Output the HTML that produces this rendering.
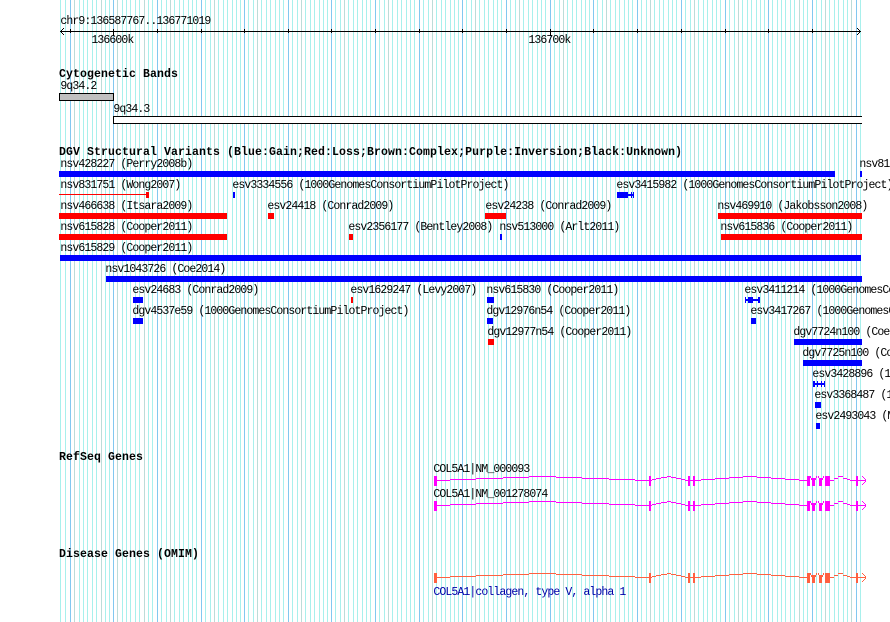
<!DOCTYPE html>
<html><head><meta charset="utf-8"><style>
html,body{margin:0;padding:0;background:#fff;width:890px;height:622px;overflow:hidden}
svg{display:block}
text{font-family:"Liberation Mono",monospace;font-size:11.5px;letter-spacing:-.9px;fill:#000;white-space:pre;transform:translate(.4px,-1px)}
text.b{font-weight:bold;letter-spacing:.1px;transform:translate(0,-1px)}
</style></head><body>
<svg width="890" height="622" viewBox="0 0 890 622" xmlns="http://www.w3.org/2000/svg" shape-rendering="crispEdges">
<defs>
<g id="blk"><path d="M0 0h1v622h-1z" fill="#82c8f0"/><path d="M4 0h1v622h-1zM9 0h1v622h-1zM13 0h1v622h-1zM17 0h1v622h-1zM22 0h1v622h-1zM26 0h1v622h-1zM31 0h1v622h-1zM35 0h1v622h-1zM39 0h1v622h-1z" fill="#a8f0ec"/></g>
<g id="gene">
<path fill="none" stroke="currentColor" d="M437 480.5H450M450 479.5H476M476 478.5H503M503 477.5H529M529 476.5H556M556 477.5H582M582 478.5H609M609 479.5H635M635 480.5H649M651 480.5H652M652 479.5H656M656 478.5H661M661 477.5H667M667 476.5H671M671 477.5H676M676 478.5H681M681 479.5H685M685 480.5H688M690 480.5H693M695 480.5H701M701 479.5H715M715 478.5H729M729 477.5H743M743 476.5H757M757 477.5H771M771 478.5H785M785 479.5H799M799 480.5H807M830 480.5H834M834 478.5H838M838 476.5H843M843 478.5H847M847 479.5H850M850 480.5H856M858 480.5H866M862 476.5h1M863 477.5h1M864 478.5h1M865 479.5h1M865 481.5h1M864 482.5h1M863 483.5h1M862 484.5h1"/>
<path fill="currentColor" d="M434 476h3v10h-3zM649 476h2v10h-2zM688 476h2v10h-2zM693 476h2v10h-2zM807 476h3v10h-3zM812 478h3v8h-3zM810 476h1v2h-1zM811 478h1v2h-1zM815 478h1v2h-1zM816 476h1v2h-1zM818 476h1v2h-1zM819 478h3v8h-3zM822 478h1v2h-1zM823 476h1v2h-1zM825 476h5v10h-5zM856 476h2v10h-2z"/>
</g>
</defs>
<rect x="60" y="0" width="1" height="622" fill="#a8f0ec"/><rect x="65" y="0" width="1" height="622" fill="#a8f0ec"/>
<use href="#blk" x="70"/><use href="#blk" x="113"/><use href="#blk" x="157"/><use href="#blk" x="201"/><use href="#blk" x="244"/><use href="#blk" x="288"/><use href="#blk" x="331"/><use href="#blk" x="375"/><use href="#blk" x="419"/><use href="#blk" x="462"/><use href="#blk" x="506"/><use href="#blk" x="550"/><use href="#blk" x="593"/><use href="#blk" x="637"/><use href="#blk" x="681"/><use href="#blk" x="725"/><use href="#blk" x="768"/><use href="#blk" x="812"/>
<path d="M856 0h1v622h-1z" fill="#82c8f0"/><path d="M860 0h1v622h-1z" fill="#a8f0ec"/>
<path fill="#bcdcd8" d="M74 0h1v622h-1zM101 0h1v622h-1zM117 0h1v622h-1zM144 0h1v622h-1zM170 0h1v622h-1zM214 0h1v622h-1zM257 0h1v622h-1zM301 0h1v622h-1zM344 0h1v622h-1zM388 0h1v622h-1zM432 0h1v622h-1zM475 0h1v622h-1zM519 0h1v622h-1zM563 0h1v622h-1zM606 0h1v622h-1zM650 0h1v622h-1zM694 0h1v622h-1zM738 0h1v622h-1zM799 0h1v622h-1zM825 0h1v622h-1zM851 0h1v622h-1z"/>

<!-- ruler -->
<text x="60" y="25">chr9:136587767..136771019</text>
<path fill="none" stroke="#000" d="M60 31.5H861M70.5 29V33M113.5 29V36M157.5 29V33M201.5 29V33M244.5 29V33M288.5 29V33M331.5 29V33M375.5 29V33M419.5 29V33M462.5 29V33M506.5 29V33M550.5 29V36M593.5 29V33M637.5 29V33M681.5 29V33M725.5 29V33M768.5 29V33M812.5 29V33M63.5 28V29M62.5 29V30M61.5 30V31M60.5 31V32M61.5 32V33M62.5 33V34M63.5 34V35M857.5 28V29M858.5 29V30M859.5 30V31M860.5 31V32M859.5 32V33M858.5 33V34M857.5 34V35"/>
<text x="91" y="44">136600k</text>
<text x="528" y="44">136700k</text>

<!-- cytobands -->
<text class="b" x="59" y="78">Cytogenetic Bands</text>
<text x="60" y="90">9q34.2</text>
<rect x="59.5" y="93.5" width="54" height="7" fill="#c0c0c0" stroke="#000"/>
<text x="113" y="113">9q34.3</text>
<path fill="#fff" d="M113 116h749v8h-749z"/>
<path fill="none" stroke="#000" d="M862 116.5H113.5V123.5H862"/>

<!-- DGV -->
<text class="b" x="59" y="156">DGV Structural Variants (Blue:Gain;Red:Loss;Brown:Complex;Purple:Inversion;Black:Unknown)</text>
<path fill="#0000ff" d="M59 171h776v6h-776zM860 171h2v6h-2zM233 192h2v6h-2zM617 192h11v6h-11zM628 194h3v2h-3zM631 192h1v6h-1zM632 194h1v2h-1zM633 192h1v6h-1zM500 234h2v6h-2zM60 255h801v6h-801zM106 276h756v6h-756zM133 297h10v6h-10zM487 297h7v6h-7zM745 297h1v6h-1zM746 299h2v2h-2zM748 297h5v6h-5zM753 299h5v2h-5zM758 297h2v6h-2zM133 318h10v6h-10zM487 318h6v6h-6zM751 318h5v6h-5zM794 339h68v6h-68zM803 360h59v6h-59zM813 381h2v6h-2zM815 383h2v2h-2zM817 381h1v6h-1zM818 383h3v2h-3zM821 381h1v6h-1zM822 383h2v2h-2zM824 381h1v6h-1zM815 402h6v6h-6zM816 423h4v6h-4z"/>
<path fill="#ff0000" d="M59 194h87v1h-87zM146 192h3v6h-3zM59 213h168v6h-168zM268 213h6v6h-6zM485 213h21v6h-21zM718 213h144v6h-144zM59 234h168v6h-168zM349 234h4v6h-4zM721 234h141v6h-141zM351 297h2v6h-2zM488 339h6v6h-6z"/>
<text x="60" y="168">nsv428227 (Perry2008b)</text>
<text x="859" y="168">nsv81</text>
<text x="60" y="189">nsv831751 (Wong2007)</text>
<text x="232" y="189">esv3334556 (1000GenomesConsortiumPilotProject)</text>
<text x="616" y="189">esv3415982 (1000GenomesConsortiumPilotProject)</text>
<text x="60" y="210">nsv466638 (Itsara2009)</text>
<text x="267" y="210">esv24418 (Conrad2009)</text>
<text x="485" y="210">esv24238 (Conrad2009)</text>
<text x="717" y="210">nsv469910 (Jakobsson2008)</text>
<text x="60" y="231">nsv615828 (Cooper2011)</text>
<text x="348" y="231">esv2356177 (Bentley2008)</text>
<text x="499" y="231">nsv513000 (Arlt2011)</text>
<text x="720" y="231">nsv615836 (Cooper2011)</text>
<text x="60" y="252">nsv615829 (Cooper2011)</text>
<text x="105" y="273">nsv1043726 (Coe2014)</text>
<text x="132" y="294">esv24683 (Conrad2009)</text>
<text x="350" y="294">esv1629247 (Levy2007)</text>
<text x="486" y="294">nsv615830 (Cooper2011)</text>
<text x="744" y="294">esv3411214 (1000GenomesConsortiumPilotProject)</text>
<text x="132" y="315">dgv4537e59 (1000GenomesConsortiumPilotProject)</text>
<text x="486" y="315">dgv12976n54 (Cooper2011)</text>
<text x="750" y="315">esv3417267 (1000GenomesConsortiumPilotProject)</text>
<text x="487" y="336">dgv12977n54 (Cooper2011)</text>
<text x="793" y="336">dgv7724n100 (Coe2014)</text>
<text x="802" y="357">dgv7725n100 (Coe2014)</text>
<text x="812" y="378">esv3428896 (1000GenomesConsortiumPilotProject)</text>
<text x="814" y="399">esv3368487 (1000GenomesConsortiumPilotProject)</text>
<text x="815" y="420">esv2493043 (McCarroll2008)</text>

<!-- genes -->
<text class="b" x="59" y="461">RefSeq Genes</text>
<text x="433" y="473">COL5A1|NM_000093</text>
<use href="#gene" color="#ff00ff"/>
<text x="433" y="498">COL5A1|NM_001278074</text>
<use href="#gene" y="25" color="#ff00ff"/>
<text class="b" x="59" y="558">Disease Genes (OMIM)</text>
<use href="#gene" y="97" color="#ff6040"/>
<text x="433" y="596" style="fill:#0000a8">COL5A1|collagen, type V, alpha 1</text>
</svg>
</body></html>
